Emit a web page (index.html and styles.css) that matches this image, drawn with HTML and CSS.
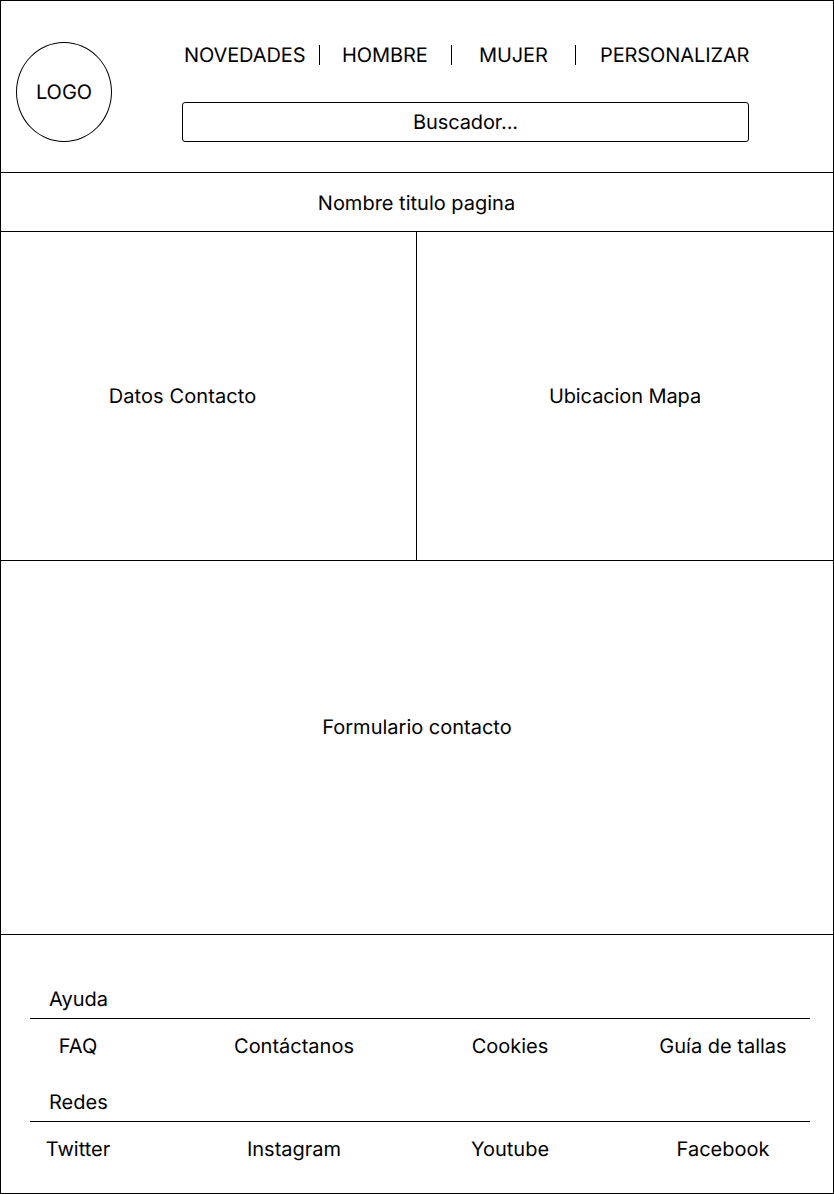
FILE: index.html
```html
<!DOCTYPE html>
<html lang="es">
<head>
<meta charset="utf-8">
<title>Contacto</title>
<link rel="stylesheet" href="styles.css">
</head>
<body>
<div class="page">
  <header class="header">
    <div class="logo">LOGO</div>
    <div class="header-main">
      <nav class="nav">
        <a class="nav-item nav-novedades">NOVEDADES</a>
        <a class="nav-item nav-hombre">HOMBRE</a>
        <a class="nav-item nav-mujer">MUJER</a>
        <a class="nav-item nav-personalizar">PERSONALIZAR</a>
      </nav>
      <div class="search">Buscador...</div>
    </div>
  </header>
  <h1 class="title">Nombre titulo pagina</h1>
  <main>
    <div class="info">
      <section class="contact">Datos Contacto</section>
      <section class="map">Ubicacion Mapa</section>
    </div>
    <section class="form">Formulario contacto</section>
  </main>
  <footer class="footer">
    <h2 class="footer-title">Ayuda</h2>
    <div class="links">
      <a>FAQ</a><a class="link-second">Contáctanos</a><a>Cookies</a><a>Guía de tallas</a>
    </div>
    <h2 class="footer-title">Redes</h2>
    <div class="links">
      <a>Twitter</a><a class="link-second">Instagram</a><a>Youtube</a><a>Facebook</a>
    </div>
  </footer>
</div>
</body>
</html>
```
FILE: styles.css
```css
* { box-sizing: border-box; }
body {
  margin: 0;
  background: #fff;
  color: #000;
  font: 400 20px/24px Inter, sans-serif;
  text-rendering: geometricPrecision;
}
h1, h2 { margin: 0; font: inherit; }
.page {
  width: 834px;
  height: 1194px;
  border: 1px solid #000;
  white-space: nowrap;
}
.header {
  display: flex;
  height: 172px;
  padding: 41px 0 0 15px;
  border-bottom: 1px solid #000;
}
.logo {
  display: flex;
  align-items: center;
  justify-content: center;
  width: 96px;
  height: 100px;
  border: 1px solid #000;
  border-radius: 50%;
}
.header-main { width: 567px; margin-left: 70px; }
.nav {
  display: flex;
  align-items: center;
  height: 26px;
  padding-left: 2px;
  letter-spacing: -0.1px;
}
.nav-item { flex-shrink: 0; height: 20px; line-height: 20px; }
.nav-novedades { width: 136px; border-right: 1px solid #000; }
.nav-hombre { width: 132px; padding-left: 22px; border-right: 1px solid #000; }
.nav-mujer { width: 124px; padding-left: 27px; border-right: 1px solid #000; }
.nav-personalizar { padding-left: 24px; }
.search {
  height: 40px;
  margin-top: 34px;
  border: 1px solid #000;
  border-radius: 3px;
  letter-spacing: -0.1px;
  line-height: 38px;
  text-align: center;
}
.title {
  height: 59px;
  padding: 18px 1px 0 0;
  border-bottom: 1px solid #000;
  text-align: center;
}
.info {
  display: grid;
  grid-template-columns: 416px 416px;
  height: 329px;
  border-bottom: 1px solid #000;
  line-height: 328px;
  text-align: center;
}
.contact {
  padding-right: 52px;
  border-right: 1px solid #000;
  letter-spacing: 0.1px;
}
.map { letter-spacing: -0.1px; }
.form {
  height: 374px;
  padding-top: 154px;
  border-bottom: 1px solid #000;
  text-align: center;
}
.footer { padding: 52px 23px 0 29px; }
.footer-title {
  height: 32px;
  padding-left: 19px;
  border-bottom: 1px solid #000;
}
.links {
  display: grid;
  grid-template-columns: 96px 258px 252px 174px;
  height: 71px;
  padding-top: 15px;
  text-align: center;
}
.link-second { padding-left: 78px; }
```
